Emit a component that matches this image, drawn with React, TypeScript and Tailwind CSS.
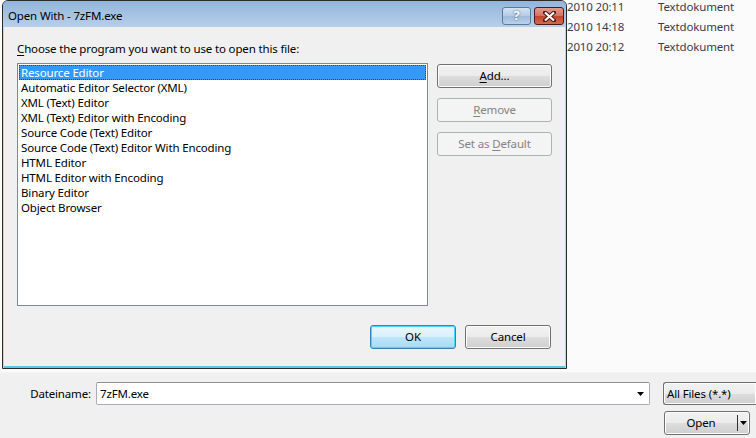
import React from 'react';

const font = { fontFamily: '"Noto Sans", "Open Sans", sans-serif' };

const programs = [
  'Resource Editor',
  'Automatic Editor Selector (XML)',
  'XML (Text) Editor',
  'XML (Text) Editor with Encoding',
  'Source Code (Text) Editor',
  'Source Code (Text) Editor With Encoding',
  'HTML Editor',
  'HTML Editor with Encoding',
  'Binary Editor',
  'Object Browser',
];

const txt = 'text-[11.5px] tracking-[-0.15px]';
const btn = `flex items-center justify-center rounded-[3px] border ${txt} leading-none`;
const btnOn =
  'border-[#707070] bg-[linear-gradient(#f2f2f2_0%,#ebebeb_50%,#dddddd_51%,#cfcfcf_100%)] text-black shadow-[inset_0_0_0_1px_#fcfcfc]';
const btnOff = 'border-[#adb2b5] bg-[#f4f4f4] text-[#838383]';

function Mn({ children }: { children: React.ReactNode }) {
  return <span className="underline underline-offset-2">{children}</span>;
}

function Arrow() {
  return (
    <svg width="7" height="4" viewBox="0 0 7 4">
      <path d="M0 0 H7 L3.5 4 Z" fill="#000" />
    </svg>
  );
}

function Dialog() {
  return (
    <div
      className="absolute left-[2px] top-0 flex h-[369px] w-[565px] flex-col rounded-t-[6px] border border-[#2b2b2b] bg-[#bcd3ec]"
      style={font}
    >
      {/* title bar */}
      <div className="flex h-[26px] items-center justify-between rounded-t-[5px] bg-[linear-gradient(#93b5dc,#b7cfea)] pl-[5px] pr-[2px]">
        <span className={`pt-[4px] ${txt} text-black`}>Open With - 7zFM.exe</span>
        <div className="flex gap-[3px] pt-[4px]">
          <div className="flex h-[18px] w-[29px] items-center justify-center rounded-[3px] border border-[#5f7894] bg-[linear-gradient(#d4e3f3_0%,#b5cbe3_50%,#9fbbdc_51%,#b9d2ec_100%)] text-[13px] font-bold text-white [text-shadow:0_0_2px_#2c3e55]">
            ?
          </div>
          <div className="flex h-[18px] w-[30px] items-center justify-center rounded-[3px] border border-[#4e1a14] bg-[linear-gradient(#e29d8f_0%,#d3705c_50%,#c2432d_51%,#d56a4c_100%)]">
            <svg width="13" height="11" viewBox="0 0 13 11">
              <path d="M2 1.5 L11 9.5 M11 1.5 L2 9.5" stroke="#4a1a14" strokeWidth="4" strokeLinecap="square" />
              <path d="M2 1.5 L11 9.5 M11 1.5 L2 9.5" stroke="#ffffff" strokeWidth="2.2" />
            </svg>
          </div>
        </div>
      </div>

      {/* client */}
      <div className="mx-[1px] flex flex-1 flex-col border-b-[2px] border-b-[#5cc8e6] bg-[#f0f0f0] px-[13px] pt-[14px]">
        <div className={`${txt} leading-[15px] text-black`}>
          <Mn>C</Mn>hoose the program you want to use to open this file:
        </div>
        <div className="mt-[7px] flex gap-[9px]">
          <div className="h-[243px] w-[411px] border border-[#828790] bg-white p-[1px]">
            {programs.map((p, i) => (
              <div
                key={p}
                className={
                  `h-[15px] px-[2px] ${txt} leading-[15px] ` +
                  (i === 0 ? 'bg-[#3399ff] text-white outline-dotted outline-1 -outline-offset-1 outline-[#1a4d80]' : 'text-black')
                }
              >
                {p}
              </div>
            ))}
          </div>
          <div className="flex flex-col gap-[10px] pt-[1px]">
            <div className={`${btn} ${btnOn} h-[24px] w-[115px]`}>
              <Mn>A</Mn>dd...
            </div>
            <div className={`${btn} ${btnOff} h-[24px] w-[115px]`}>
              <Mn>R</Mn>emove
            </div>
            <div className={`${btn} ${btnOff} h-[24px] w-[115px]`}>
              Set as&nbsp;<Mn>D</Mn>efault
            </div>
          </div>
        </div>
        <div className="mt-[19px] flex justify-end gap-[9px] pr-[1px]">
          <div className={`${btn} h-[24px] w-[86px] border-[#3c7fb1] bg-[linear-gradient(#eaf6fd_0%,#d9f0fc_50%,#bee6fd_51%,#a7d9f5_100%)] text-black shadow-[inset_0_0_0_1px_#48d8fb]`}>
            OK
          </div>
          <div className={`${btn} ${btnOn} h-[24px] w-[86px]`}>Cancel</div>
        </div>
      </div>
    </div>
  );
}

export default function App() {
  const rows = [
    ['2010 20:11', 'Textdokument'],
    ['2010 14:18', 'Textdokument'],
    ['2010 20:12', 'Textdokument'],
  ];
  return (
    <div className="relative h-[438px] w-[756px] overflow-hidden bg-[#f0f0f0]" style={font}>
      {/* explorer list behind the dialog */}
      <div className="h-[373px] border-b border-b-[#f4f4f4] bg-[#fbfbfb]">
        <div className="ml-[567px] flex flex-col gap-[7px]">
          {rows.map(([d, t], i) => (
            <div key={i} className={`flex h-[13px] items-center ${txt} leading-[13px] text-[#3b3b4f]`}>
              <span className="w-[91px]">{d}</span>
              <span>{t}</span>
            </div>
          ))}
        </div>
      </div>

      {/* file name row */}
      <div className="mt-[9px] flex items-center">
        <span className={`w-[91px] text-right ${txt} text-black`}>Dateiname:</span>
        <div className={`ml-[5px] flex h-[23px] w-[554px] items-center justify-between rounded-[2px] border border-[#abadb3] border-t-[#8e8f8f] bg-white pl-[3px] pr-[5px] ${txt} text-black`}>
          <span>7zFM.exe</span>
          <Arrow />
        </div>
        <div className={`ml-[13px] flex h-[23px] flex-1 items-center rounded-l-[3px] border border-r-0 border-[#707070] bg-[linear-gradient(#f2f2f2_0%,#ebebeb_50%,#dddddd_51%,#cfcfcf_100%)] pl-[3px] ${txt} text-black shadow-[inset_0_0_0_1px_#fcfcfc]`}>
          All Files (*.*)
        </div>
      </div>

      <div className="mt-[6px] flex justify-end pr-[6px]">
        <div className={`${btn} ${btnOn} h-[24px] w-[86px] justify-start`}>
          <span className="w-[72px] text-center">Open</span>
          <div className="h-[16px] w-px bg-[#303030]" />
          <div className="flex flex-1 justify-center">
            <Arrow />
          </div>
        </div>
      </div>

      <Dialog />
    </div>
  );
}
